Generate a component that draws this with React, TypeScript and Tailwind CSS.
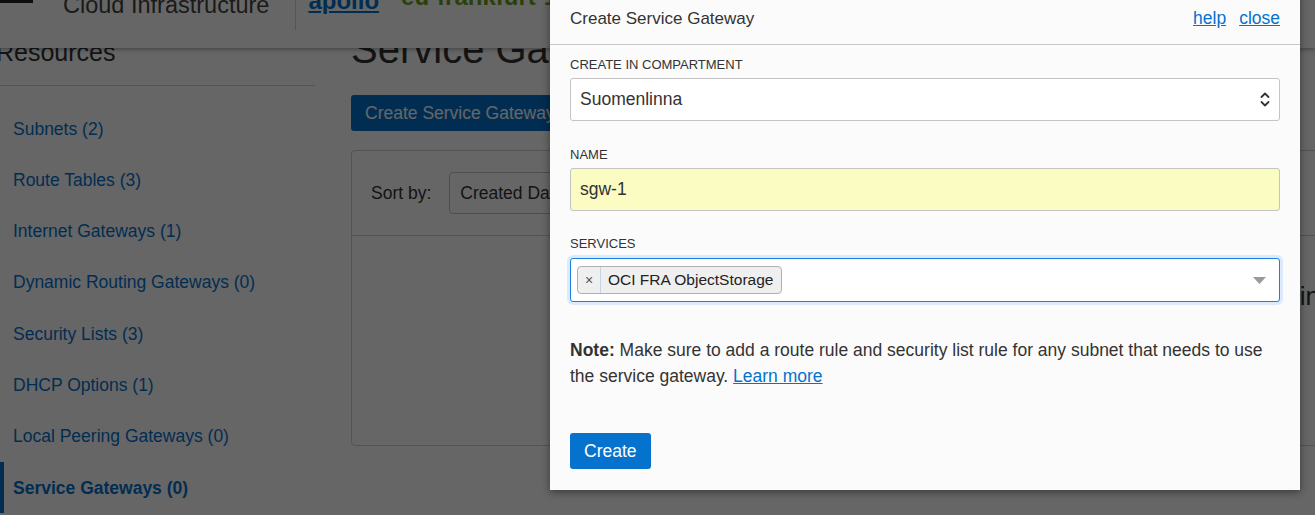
import React from 'react';

const navItems = [
  'Subnets (2)',
  'Route Tables (3)',
  'Internet Gateways (1)',
  'Dynamic Routing Gateways (0)',
  'Security Lists (3)',
  'DHCP Options (1)',
  'Local Peering Gateways (0)',
];

const UpDownIcon = () => (
  <svg width="10" height="17" viewBox="0 0 10 17" fill="none">
    <path d="M1.5 6 L5 2.5 L8.5 6" stroke="#333" strokeWidth="1.8" strokeLinecap="round" strokeLinejoin="round" />
    <path d="M1.5 11 L5 14.5 L8.5 11" stroke="#333" strokeWidth="1.8" strokeLinecap="round" strokeLinejoin="round" />
  </svg>
);

const CaretDown = () => (
  <svg width="13" height="7" viewBox="0 0 13 7">
    <polygon points="0,0 13,0 6.5,7" fill="#9a9a9a" />
  </svg>
);

const App: React.FC = () => {
  return (
    <div className="relative h-[515px] w-[1315px] overflow-hidden bg-white font-['Liberation_Sans',Arial,sans-serif] text-[#333]">
      {/* page behind the dialog */}
      <header className="relative z-10 flex h-12 items-start bg-white shadow-[0_2px_4px_rgba(0,0,0,0.3)]">
        <div className="h-[3px] w-[33px] bg-[#222]" />
        <span className="ml-[30px] -mt-[6px] whitespace-nowrap text-[23.5px] leading-none text-[#444]">
          Cloud Infrastructure
        </span>
        <div className="ml-[26px] h-[30px] w-px bg-[#d4d4d4]" />
        <a className="ml-[12px] -mt-[11px] text-[24px] font-bold leading-none text-[#0572ce] underline">apollo</a>
        <span className="ml-[22px] -mt-[15px] whitespace-nowrap text-[24px] font-bold leading-none text-[#6aa41e]">
          eu-frankfurt-1
        </span>
      </header>

      <div className="-mt-[6px] flex">
        <aside className="w-[315px] shrink-0">
          <div className="border-b border-[#cfcfcf] pb-[21px]">
            <h2 className="-ml-[4px] -mt-[2px] text-[25px] leading-6 text-[#333]">Resources</h2>
          </div>
          <nav className="mt-[17px] flex flex-col">
            {navItems.map((item) => (
              <a key={item} className="flex h-[51.3px] items-center pl-[13px] text-[17.5px] text-[#0572ce]">
                {item}
              </a>
            ))}
            <a className="flex h-[51.3px] items-center border-l-4 border-[#0572ce] pl-[9px] text-[17.5px] font-bold text-[#0572ce]">
              Service Gateways (0)
            </a>
          </nav>
        </aside>

        <main className="ml-[36px] min-w-0 flex-1">
          <h1 className="-mt-[13px] whitespace-nowrap text-[40px] leading-10 text-[#333]">Service Gateways</h1>
          <button className="mt-[26px] h-9 whitespace-nowrap rounded-[3px] bg-[#0572ce] px-[14px] text-[17.5px] text-white">
            Create Service Gateway
          </button>
          <div className="-mr-[20px] mt-[19px] rounded-[4px] border border-[#d0d0d0]">
            <div className="flex items-center border-b border-[#d0d0d0] px-[19px] py-[21px]">
              <span className="text-[17.5px]">Sort by:</span>
              <div className="ml-[18px] flex h-[42px] w-[240px] items-center rounded-[4px] border border-[#c4c4c4] px-[10px] text-[17.5px]">
                Created Date
              </div>
            </div>
            <div className="h-[209px] pt-[45px]">
              <p className="whitespace-nowrap pl-[640px] text-[26px] leading-[30px]">No service gateways exist in</p>
            </div>
          </div>
        </main>
      </div>

      {/* dim overlay */}
      <div className="absolute inset-0 z-20 bg-black/60" />

      {/* dialog */}
      <div className="absolute left-[550px] top-[-7px] z-30 w-[750px] bg-[#fbfbfb] shadow-[0_2px_8px_rgba(0,0,0,0.45)]">
        <div className="flex h-[52px] items-center justify-between border-b border-[#c8c8c8] px-5">
          <span className="text-[17px] text-[#333]">Create Service Gateway</span>
          <div className="flex gap-[13px] text-[17.5px] text-[#0572ce]">
            <a className="underline">help</a>
            <a className="underline">close</a>
          </div>
        </div>

        <div className="px-5 pb-[21px]">
          <label className="block pt-[12px] text-[13px] uppercase leading-4 text-[#333]">Create in compartment</label>
          <div className="mt-[5px] flex h-[43px] items-center justify-between rounded-[3px] border border-[#c4c4c4] bg-white pl-[9px] pr-[9px] text-[17.5px]">
            <span>Suomenlinna</span>
            <UpDownIcon />
          </div>

          <label className="mt-[26px] block text-[13px] uppercase leading-4 text-[#333]">Name</label>
          <div className="mt-[5px] flex h-[43px] items-center rounded-[3px] border border-[#c4c4c4] bg-[#fafcc2] pl-[9px] text-[17.5px]">
            sgw-1
          </div>

          <label className="mt-[25px] block text-[13px] uppercase leading-4 text-[#333]">Services</label>
          <div className="mt-[6px] flex h-[44px] items-center justify-between rounded-[3px] border border-[#1a7fe0] bg-white pl-[6px] pr-[13px] shadow-[0_0_0_3px_#dcebfb]">
            <div className="flex h-[28px] items-center rounded-[4px] border border-[#b0b0b0] bg-[#efefef]">
              <span className="flex h-full w-[23px] items-center justify-center border-r border-[#c3d5e6] text-[14px] text-[#555]">
                ×
              </span>
              <span className="pl-[7px] pr-[8px] text-[15.5px] text-[#222]">OCI FRA ObjectStorage</span>
            </div>
            <CaretDown />
          </div>

          <p className="mt-[35px] text-[17.5px] leading-[26px] text-[#333]">
            <strong>Note:</strong> Make sure to add a route rule and security list rule for any subnet that needs to use
            the service gateway. <a className="text-[#0572ce] underline">Learn more</a>
          </p>

          <button className="mt-[44px] h-9 rounded-[3px] bg-[#0572ce] px-[14px] text-[17.5px] text-white">Create</button>
        </div>
      </div>
    </div>
  );
};

export default App;
